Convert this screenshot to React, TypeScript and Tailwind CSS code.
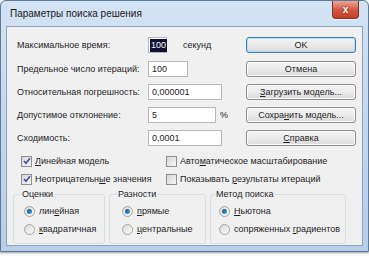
import React from "react";

const font = { fontFamily: '"Liberation Sans", Arial, sans-serif' };
const txt = "text-[9px] leading-none text-[#1e1e1e]";

function Btn({ children, def }: { children: React.ReactNode; def?: boolean }) {
  return (
    <div
      className={`h-[16px] w-[110px] rounded-[3px] border flex items-center justify-center ${txt} bg-gradient-to-b from-[#f4f4f4] via-[#ebebeb] to-[#d9d9d9] ${
        def ? "border-[#3c7fb1] shadow-[inset_0_0_0_1px_#b5def6]" : "border-[#8c8c8c] shadow-[inset_0_0_0_1px_#fbfbfb]"
      }`}
    >
      {children}
    </div>
  );
}

function Input({ w, children }: { w: string; children: React.ReactNode }) {
  return (
    <div className={`h-[16px] ${w} border border-[#b5b8c0] bg-white flex items-center pl-[3px] ${txt}`}>
      {children}
    </div>
  );
}

function Box({ on }: { on?: boolean }) {
  return (
    <div className="w-[11px] h-[11px] border border-[#8e8f8f] bg-gradient-to-br from-[#d6d6d6] to-[#f7f7f7] flex items-center justify-center shrink-0">
      {on && (
        <svg width="8" height="8" viewBox="0 0 8 8">
          <path d="M1 4 L3 6.3 L7 1.2" stroke="#3c4fa0" strokeWidth="1.6" fill="none" />
        </svg>
      )}
    </div>
  );
}

function Check({ on, children }: { on?: boolean; children: React.ReactNode }) {
  return (
    <div className={`h-[12px] flex items-center gap-[3px] ${txt}`}>
      <Box on={on} />
      <span>{children}</span>
    </div>
  );
}

function Radio({ on, children }: { on?: boolean; children: React.ReactNode }) {
  return (
    <div className={`h-[11px] flex items-center gap-[4px] ${txt}`}>
      <div className="w-[11px] h-[11px] rounded-full border border-[#a4a4a4] bg-gradient-to-br from-[#d9d9d9] to-[#fbfbfb] flex items-center justify-center shrink-0">
        {on && <div className="w-[5px] h-[5px] rounded-full bg-gradient-to-br from-[#14507f] to-[#45a3d9]" />}
      </div>
      <span>{children}</span>
    </div>
  );
}

function Group({ title, w, pl, tl, children }: { title: string; w: string; pl: string; tl: string; children: React.ReactNode }) {
  return (
    <div className={`${w} relative h-[50px] border border-[#d5dfe5] rounded-[3px]`}>
      <div className={`absolute -top-[5px] ${tl} bg-[#f0f0f0] px-[1px] ${txt}`}>{title}</div>
      <div className={`flex flex-col gap-[7px] ${pl} pt-[11px]`}>{children}</div>
    </div>
  );
}

const U = ({ children }: { children: React.ReactNode }) => <span className="underline underline-offset-[1px]">{children}</span>;

function Row({ label, children, btn, mt }: { label: string; children: React.ReactNode; btn: React.ReactNode; mt: string }) {
  return (
    <div className={`flex items-center h-[16px] ${mt}`}>
      <div className="w-[229px] flex items-center">
        <span className={`w-[131px] ${txt}`}>{label}</span>
        {children}
      </div>
      {btn}
    </div>
  );
}

export default function App() {
  return (
    <div className="w-[369px] h-[256px] bg-[#f7f8fa] overflow-hidden" style={font}>
      <div className="w-[369px] h-[252px] rounded-t-[6px] border border-[#5f7894] bg-gradient-to-b from-[#d3e3f4] via-[#c3d7ee] to-[#b8cfe9] flex flex-col shadow-[0_1px_2px_rgba(0,0,0,0.35)]">
        <div className="h-[25px] flex items-start justify-between pl-[9px] pr-[9px]">
          <span className="mt-[8px] text-[10px] leading-none text-[#1a1a1a]">Параметры поиска решения</span>
          <div className="w-[27px] h-[18px] rounded-b-[4px] border border-[#7d3328] border-t-0 bg-gradient-to-b from-[#e9a898] via-[#d45a44] to-[#c43e26] flex items-center justify-center shadow-[0_1px_0_rgba(255,255,255,0.6)]">
            <span className="text-white text-[10px] font-bold leading-none [text-shadow:0_0_2px_#5a1a10]">x</span>
          </div>
        </div>
        <div className="ml-[5px] w-[357px] h-[220px] border border-[#8da3bd] bg-[#f0f0f0] flex flex-col pl-[10px] pr-[6px] pt-[10px]">
          <Row label="Максимальное время:" mt="" btn={<Btn def>OK</Btn>}>
            <div className="h-[16px] w-[19px] border border-[#b5b8c0] bg-white flex items-center pl-[1px]">
              <span className="bg-[#101035] text-white text-[9px] leading-none px-[1px] py-[2px]">100</span>
            </div>
            <span className={`ml-[16px] ${txt}`}>секунд</span>
          </Row>
          <Row label="Предельное число итераций:" mt="mt-[8px]" btn={<Btn>Отмена</Btn>}>
            <Input w="w-[40px]">100</Input>
          </Row>
          <Row label="Относительная погрешность:" mt="mt-[7px]" btn={<Btn><span><U>З</U>агрузить модель...</span></Btn>}>
            <Input w="w-[74px]">0,000001</Input>
          </Row>
          <Row label="Допустимое отклонение:" mt="mt-[7px]" btn={<Btn><span>Сохра<U>н</U>ить модель...</span></Btn>}>
            <Input w="w-[68px]">5</Input>
            <span className={`ml-[4px] ${txt}`}>%</span>
          </Row>
          <Row label="Сходимость:" mt="mt-[7px]" btn={<Btn><span><U>С</U>правка</span></Btn>}>
            <Input w="w-[74px]">0,0001</Input>
          </Row>
          <div className="mt-[9px] flex pl-[4px]">
            <div className="w-[145px] flex flex-col gap-[6px]">
              <Check on><U>Л</U>инейная модель</Check>
              <Check on>Неотрицательн<U>ы</U>е значения</Check>
            </div>
            <div className="flex flex-col gap-[6px]">
              <Check>Авто<U>м</U>атическое масштабирование</Check>
              <Check>Показывать <U>р</U>езультаты итераций</Check>
            </div>
          </div>
          <div className="mt-[9px] flex -ml-[4px]">
            <Group title="Оценки" w="w-[92px]" pl="pl-[10px]" tl="left-[7px]">
              <Radio on>лин<U>е</U>йная</Radio>
              <Radio><U>к</U>вадратичная</Radio>
            </Group>
            <Group title="Разности" w="w-[97px] ml-[4px]" pl="pl-[12px]" tl="left-[7px]">
              <Radio on><U>п</U>рямые</Radio>
              <Radio><U>ц</U>ентральные</Radio>
            </Group>
            <Group title="Метод поиска" w="w-[136px] ml-[4px]" pl="pl-[8px]" tl="left-[4px]">
              <Radio on><U>Н</U>ьютона</Radio>
              <Radio>сопряженных <U>г</U>радиентов</Radio>
            </Group>
          </div>
        </div>
      </div>
    </div>
  );
}
